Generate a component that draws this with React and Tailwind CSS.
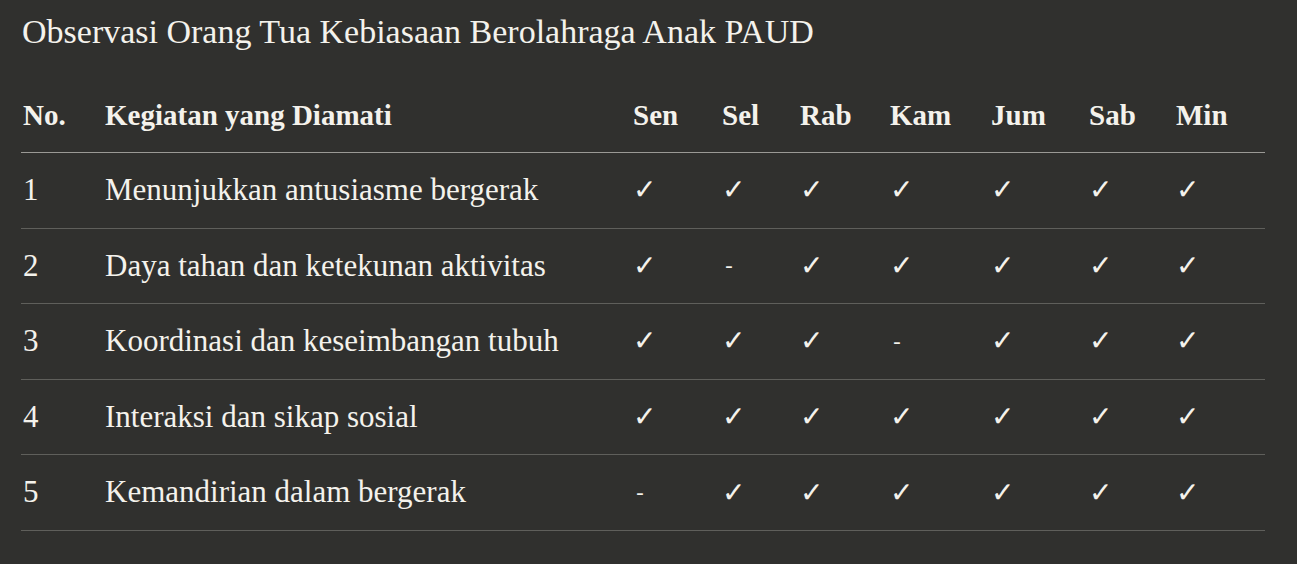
import React from "react";

const days = ["Sen", "Sel", "Rab", "Kam", "Jum", "Sab", "Min"];
const rows = [
  ["1", "Menunjukkan antusiasme bergerak", ["✓", "✓", "✓", "✓", "✓", "✓", "✓"]],
  ["2", "Daya tahan dan ketekunan aktivitas", ["✓", "-", "✓", "✓", "✓", "✓", "✓"]],
  ["3", "Koordinasi dan keseimbangan tubuh", ["✓", "✓", "✓", "-", "✓", "✓", "✓"]],
  ["4", "Interaksi dan sikap sosial", ["✓", "✓", "✓", "✓", "✓", "✓", "✓"]],
  ["5", "Kemandirian dalam bergerak", ["-", "✓", "✓", "✓", "✓", "✓", "✓"]],
];

const grid =
  "grid grid-cols-[82px_528px_89px_78px_90px_101px_98px_87px_91px] w-[1244px]";

function Mark({ v }) {
  if (v === "-") {
    return <span className="pl-[3px] text-[22px] font-['DejaVu_Sans',sans-serif]">-</span>;
  }
  return (
    <span className="text-[28px] font-['DejaVu_Sans',sans-serif] font-light">✓</span>
  );
}

export default function App() {
  return (
    <div className="w-[1297px] h-[564px] bg-[#30302e] text-[#f4f2ec] font-['Liberation_Serif',serif] overflow-hidden">
      <div className="pl-[21px] pt-[11px]">
        <h1 className="text-[34px] leading-[42px] font-normal pl-[1px]">
          Observasi Orang Tua Kebiasaan Berolahraga Anak PAUD
        </h1>
        <div className="mt-[22px]">
          <div className={`${grid} h-[78px] border-b border-[#9a9995] font-bold text-[29px]`}>
            <div className="pl-[2px] flex items-center pt-[4px]">No.</div>
            <div className="pl-[2px] flex items-center pt-[4px]">Kegiatan yang Diamati</div>
            {days.map((d) => (
              <div key={d} className="pl-[2px] flex items-center pt-[4px]">
                {d}
              </div>
            ))}
          </div>
          {rows.map(([n, t, marks]) => (
            <div key={n} className={`${grid} h-[75.6px] border-b border-[#5f5f5b] text-[31px]`}>
              <div className="pl-[2px] flex items-center">{n}</div>
              <div className="pl-[2px] flex items-center">{t}</div>
              {marks.map((m, i) => (
                <div key={i} className="pl-[2px] flex items-center">
                  <Mark v={m} />
                </div>
              ))}
            </div>
          ))}
        </div>
      </div>
    </div>
  );
}
